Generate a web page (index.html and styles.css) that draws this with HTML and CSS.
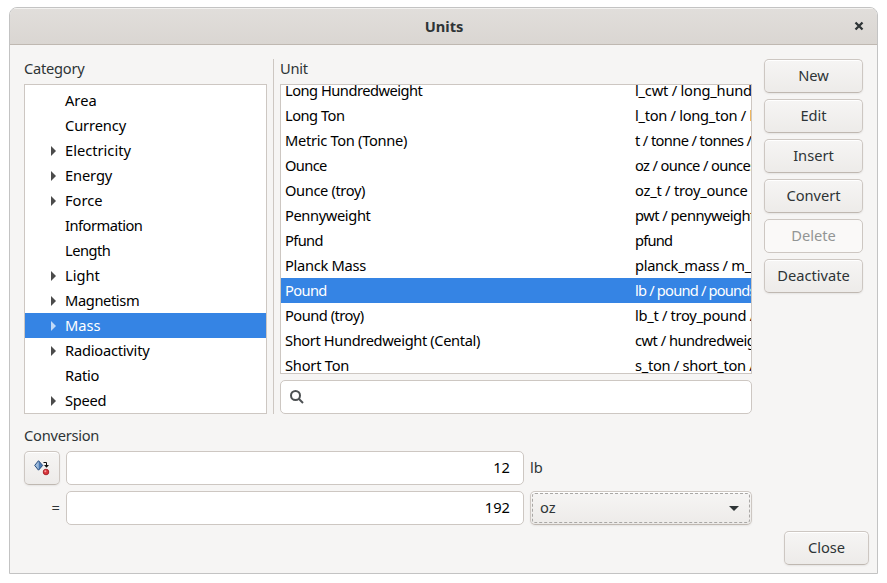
FILE: index.html
```
<!DOCTYPE html>
<html lang="en">
<head>
<meta charset="utf-8">
<title>Units</title>
<link rel="stylesheet" href="styles.css">
</head>
<body>
<div class="window">
  <header class="titlebar">
    <h1>Units</h1>
    <svg class="close-icon" width="10" height="10" viewBox="0 0 10 10"><path d="M1.5 1.5L8.5 8.5M8.5 1.5L1.5 8.5"/></svg>
  </header>
  <main class="content">
    <section class="upper">
      <div class="category">
        <div class="label">Category</div>
        <ul class="list tree">
          <li>Area</li>
          <li class="k1">Currency</li>
          <li class="parent">Electricity</li>
          <li class="parent k1">Energy</li>
          <li class="parent">Force</li>
          <li class="k5">Information</li>
          <li class="k5">Length</li>
          <li class="parent">Light</li>
          <li class="parent k4">Magnetism</li>
          <li class="parent selected">Mass</li>
          <li class="parent k2">Radioactivity</li>
          <li class="k2">Ratio</li>
          <li class="parent k3">Speed</li>
        </ul>
      </div>
      <div class="separator"></div>
      <div class="unit">
        <div class="label">Unit</div>
        <ul class="list units">
          <li><span class="k5">Long Hundredweight</span><span class="k2">l_cwt / long_hund</span></li>
          <li><span class="k5">Long Ton</span><span class="k3">l_ton / long_ton / l</span></li>
          <li><span class="k3">Metric Ton (Tonne)</span><span class="k6">t / tonne / tonnes /</span></li>
          <li><span class="k6">Ounce</span><span class="k6">oz / ounce / ounces</span></li>
          <li><span class="k4">Ounce (troy)</span><span class="k2">oz_t / troy_ounce</span></li>
          <li><span class="k4">Pennyweight</span><span class="k5">pwt / pennyweight</span></li>
          <li><span class="k6">Pfund</span><span class="k8">pfund</span></li>
          <li><span class="k3">Planck Mass</span><span class="k3">planck_mass / m_</span></li>
          <li class="selected"><span class="k6">Pound</span><span class="k8">lb / pound / pounds</span></li>
          <li><span class="k5">Pound (troy)</span><span class="k3">lb_t / troy_pound /</span></li>
          <li><span class="k4">Short Hundredweight (Cental)</span><span class="k5">cwt / hundredweig</span></li>
          <li><span class="k2">Short Ton</span><span class="k3">s_ton / short_ton /</span></li>
        </ul>
        <div class="entry search">
          <svg width="16" height="16" viewBox="0 0 16 16"><circle cx="6.5" cy="6.5" r="4.5"/><path d="M10 10L14 14"/></svg>
        </div>
      </div>
      <div class="actions">
        <button>New</button>
        <button>Edit</button>
        <button>Insert</button>
        <button>Convert</button>
        <button disabled>Delete</button>
        <button>Deactivate</button>
      </div>
    </section>
    <section class="conversion">
      <div class="label">Conversion</div>
      <div class="row">
        <button class="swap">
          <svg width="16" height="16" viewBox="0 0 16 16">
            <path d="M4.5 .7L.7 5.4L4.5 10.2Z" fill="#9dbbdc"/>
            <path d="M4.5 .7L8.7 5.4L4.5 10.2Z" fill="#4a7ab5"/>
            <path d="M4.5 .7L8.7 5.4L4.5 10.2L.7 5.4Z" fill="none" stroke="#264b7d"/>
            <path d="M9.5 2.5H12.5V6" fill="none" stroke="#111"/>
            <path d="M10 5H15L12.5 7.7Z" fill="#111"/>
            <circle cx="12" cy="12" r="2.8" fill="#d9363c" stroke="#9c1218" stroke-width=".8"/>
            <circle cx="11.3" cy="11.2" r="1" fill="#f59a9c"/>
          </svg>
        </button>
        <div class="entry value">12</div>
        <div class="suffix">lb</div>
      </div>
      <div class="row">
        <div class="equals">=</div>
        <div class="entry value">192</div>
        <div class="combo"><span>oz</span><i class="arrow"></i></div>
      </div>
    </section>
    <footer><button class="close">Close</button></footer>
  </main>
</div>
</body>
</html>
```
FILE: styles.css
```
* { box-sizing: border-box; }
body {
  margin: 0;
  padding: 7px 9px 9px;
  height: 583px;
  overflow: hidden;
  background: #fff;
  font: 14.667px/25px "Noto Sans", sans-serif;
  color: #2e3436;
}
.window {
  height: 567px;
  border: 1px solid #c3c3c3;
  border-radius: 8px 8px 0 0;
  background: #f6f5f4;
  overflow: hidden;
}
.titlebar {
  display: grid;
  grid-template-columns: 1fr auto 1fr;
  align-items: center;
  height: 37px;
  padding-right: 13px;
  border-bottom: 1px solid #bfb8b1;
  box-shadow: inset 0 1px #f3f2f0;
  background: linear-gradient(#e1dedb, #dad6d2);
}
.titlebar h1 {
  grid-column: 2;
  margin: 0 -14px 0 0;
  font-size: 14.667px;
  line-height: 25px;
}
.close-icon {
  justify-self: end;
  fill: none;
  stroke: #2e3436;
  stroke-width: 2.3;
}
.content { padding: 14px; }
.upper { display: flex; height: 355px; }
.category { width: 243px; }
.label { height: 25px; line-height: 18px; letter-spacing: -.25px; }

/* Tracking steps for list text */
.k1 { letter-spacing: -.12px; }
.k2 { letter-spacing: -.22px; }
.k3 { letter-spacing: -.3px; }
.k4 { letter-spacing: -.38px; }
.k5 { letter-spacing: -.5px; }
.k6 { letter-spacing: -.62px; }
.k8 { letter-spacing: -.8px; }

.list {
  margin: 0;
  padding: 0;
  list-style: none;
  overflow: hidden;
  border: 1px solid #cdc7c2;
  background: #fff;
  color: #000;
  white-space: nowrap;
}
.list li { height: 25px; }
.list .selected { background: #3584e4; color: #fff; }
.tree { height: 330px; padding-top: 3px; }
.tree li { padding-left: 40px; }
.tree .parent { display: flex; align-items: center; padding-left: 26px; }
.tree .parent::before {
  content: "";
  width: 0;
  margin-right: 9px;
  border: solid transparent;
  border-width: 5px 0 5px 5px;
  border-left-color: #4b4b4b;
}
.tree .selected::before { border-left-color: #c2daf7; }
.separator { width: 1px; margin: 0 6px; background: #cdc7c2; }
.unit { width: 472px; }
.units { height: 290px; margin-bottom: 6px; }
.units li {
  display: grid;
  grid-template-columns: 350px 1fr;
  padding-left: 4px;
}
.units li:first-child { height: 18px; line-height: 11px; }
.entry {
  height: 34px;
  border: 1px solid #cdc7c2;
  border-radius: 5px;
  background: #fff;
}
.search { display: flex; align-items: center; padding-left: 8px; }
.search svg { fill: none; stroke: #4c5052; stroke-width: 2; }
.actions {
  display: flex;
  flex-direction: column;
  gap: 6px;
  width: 99px;
  margin-left: 12px;
}
button, .combo {
  height: 34px;
  margin: 0;
  padding: 0 0 2px;
  border: 1px solid #cdc7c2;
  border-bottom-color: #bfb8b1;
  border-radius: 5px;
  background: linear-gradient(#f6f5f4, #edebe9);
  box-shadow: inset 0 1px #fff, 0 1px 2px rgba(0, 0, 0, .07);
  font: inherit;
  color: #2e3436;
}
button:disabled {
  border-color: #cdc7c2;
  background: #faf9f8;
  box-shadow: none;
  color: #929595;
}
.conversion { padding-top: 12px; }
.row { display: flex; height: 34px; margin-bottom: 6px; gap: 6px; line-height: 32px; }
.swap, .equals { width: 36px; }
.swap { display: flex; align-items: center; justify-content: center; padding: 0; }
.equals { text-align: right; }
.value {
  width: 458px;
  padding-right: 13px;
  line-height: 30px;
  text-align: right;
  color: #000;
}
.combo {
  display: flex;
  align-items: center;
  justify-content: space-between;
  width: 222px;
  padding: 0 12px 0 9px;
  line-height: 30px;
  outline: 1px dashed #a9a7a5;
  outline-offset: -3px;
}
.combo span { padding-bottom: 2px; }
.arrow {
  border: solid transparent;
  border-width: 5px 5px 0;
  border-top-color: #2e3436;
}
footer { display: flex; justify-content: flex-end; margin-right: -6px; }
.close { width: 85px; }
```
